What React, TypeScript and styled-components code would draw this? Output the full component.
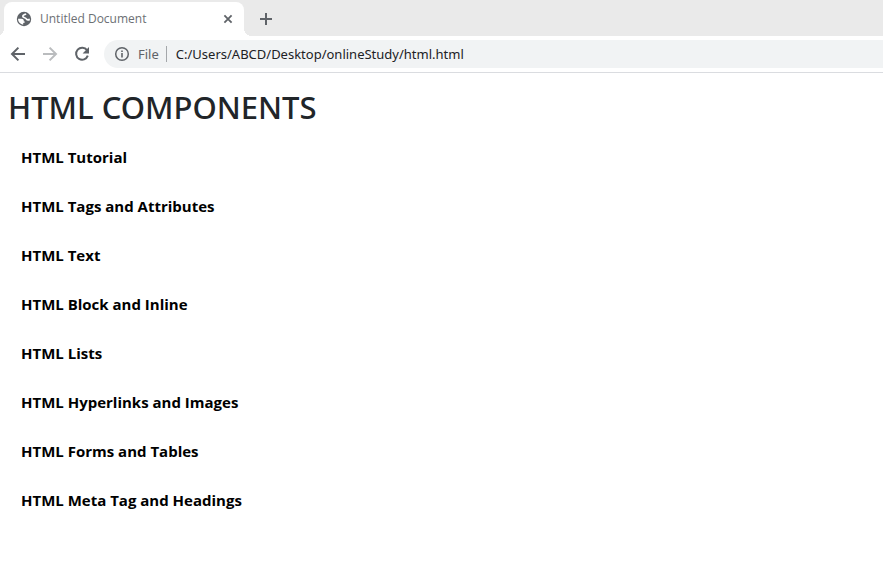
import React from "react";
import styled, { createGlobalStyle } from "styled-components";

const GlobalStyle = createGlobalStyle`
  *, *::before, *::after { box-sizing: border-box; }
  body {
    margin: 0;
    background: #fff;
    color: #212529;
    font-family: "Segoe UI", "Noto Sans", sans-serif;
    overflow-x: hidden;
  }
  button, input { font: inherit; color: inherit; border: 0; background: none; padding: 0; margin: 0; }
  svg { display: block; flex: none; }
`;

const TabStrip = styled.div`
  display: flex;
  align-items: flex-end;
  height: 36px;
  padding-left: 4px;
  background: #eaeaea;
`;

const Tab = styled.div`
  position: relative;
  display: flex;
  align-items: center;
  gap: 8px;
  width: 240px;
  height: 34px;
  padding: 0 8px 0 12px;
  border-radius: 8px 8px 0 0;
  background: #fff;
  color: #5f6368;

  &::before, &::after {
    content: "";
    position: absolute;
    bottom: 0;
    width: 8px;
    height: 8px;
  }
  &::before {
    right: 100%;
    background: radial-gradient(circle at 0 0, transparent 8px, #fff 8px);
  }
  &::after {
    left: 100%;
    background: radial-gradient(circle at 100% 0, transparent 8px, #fff 8px);
  }
`;

const TabTitle = styled.span`
  flex: 1;
  color: #6c7074;
  font-family: "Segoe UI", "Open Sans", sans-serif;
  font-size: 12px;
  line-height: 16px;
  white-space: nowrap;
`;

const IconButton = styled.button<{ $size: number }>`
  display: flex;
  align-items: center;
  justify-content: center;
  width: ${(p) => p.$size}px;
  height: ${(p) => p.$size}px;
  border-radius: 50%;
  color: #5f6368;

  &:disabled { color: #babcbe; }
`;

const NewTabSlot = styled.div`
  display: flex;
  align-items: center;
  height: 34px;
  padding-left: 8px;
`;

const Toolbar = styled.div`
  display: flex;
  align-items: center;
  gap: 4px;
  height: 37px;
  padding-left: 4px;
  border-bottom: 1px solid #dadce0;
`;

const AddressBar = styled.label`
  display: flex;
  flex: 1;
  align-items: center;
  height: 28px;
  margin-left: 4px;
  padding-left: 10px;
  border-radius: 14px 0 0 14px;
  background: #f1f3f4;
  color: #5f6368;
  font-size: 13px;
  line-height: 20px;
`;

const Scheme = styled.span`
  margin-left: 8px;
  padding-right: 7px;
`;

const Divider = styled.span`
  width: 1px;
  height: 16px;
  background: #a4a7aa;
`;

const AddressInput = styled.input`
  flex: 1;
  min-width: 0;
  margin-left: 9px;
  color: #202124;
  outline: 0;
`;

const Content = styled.main`
  padding: 12px 8px;
`;

const Title = styled.h1`
  margin: 0 0 8px;
  font-size: 31px;
  font-weight: 500;
  line-height: 44px;
`;

const TopicList = styled.ul`
  display: flex;
  flex-direction: column;
  align-items: flex-start;
  gap: 9px;
  margin: 0;
  padding: 0;
  list-style: none;
`;

const TopicButton = styled.button`
  padding: 8px 13px;
  color: #000;
  font-family: "Segoe UI", "Open Sans", sans-serif;
  font-size: 15px;
  font-weight: 700;
  line-height: 24px;
`;

const topics = [
  "HTML Tutorial",
  "HTML Tags and Attributes",
  "HTML Text",
  "HTML Block and Inline",
  "HTML Lists",
  "HTML Hyperlinks and Images",
  "HTML Forms and Tables",
  "HTML Meta Tag and Headings",
];

const GlobeIcon = () => (
  <svg width="16" height="16" viewBox="0 0 16 16" aria-hidden="true">
    <circle cx="8" cy="8" r="7.2" fill="#5f6368" />
    <path d="M2 7.8H5.4C6.9 7.8 7.8 8.7 7.8 9.8V10.6H8.8V11.4L7.2 12V13.8A6 6 0 0 1 2 7.8Z" fill="#fff" />
    <path
      d="M10 2.8C9 3.6 7 4 6.8 5.2 6.6 6.8 9.6 6.6 10.2 7.8 10.6 8.8 12.2 9 13.8 8.4"
      fill="none"
      stroke="#fff"
      strokeWidth="1.7"
    />
  </svg>
);

const StrokeIcon = ({ d, size = 16, width = 2 }: { d: string; size?: number; width?: number }) => (
  <svg width={size} height={size} viewBox={`0 0 ${size} ${size}`} fill="none" stroke="currentColor" strokeWidth={width} aria-hidden="true">
    <path d={d} />
  </svg>
);

const ReloadIcon = () => (
  <svg width="16" height="16" viewBox="0 0 16 16" aria-hidden="true">
    <path d="M13 4.2A6 6 0 1 0 13.8 9.7" fill="none" stroke="currentColor" strokeWidth="2" />
    <path d="M15 1v6.4H8.6Z" fill="currentColor" />
  </svg>
);

const InfoIcon = () => (
  <svg width="16" height="16" viewBox="0 0 16 16" aria-hidden="true">
    <circle cx="8" cy="8" r="6.3" fill="none" stroke="currentColor" strokeWidth="1.5" />
    <path d="M7.2 7h1.6v4.6H7.2zM7.2 4.4h1.6V6H7.2z" fill="currentColor" />
  </svg>
);

export default function App() {
  return (
    <>
      <GlobalStyle />
      <header>
        <TabStrip>
          <Tab>
            <GlobeIcon />
            <TabTitle>Untitled Document</TabTitle>
            <IconButton $size={16} type="button" aria-label="Close tab">
              <StrokeIcon d="M4.4 4.4 11.6 11.6M11.6 4.4 4.4 11.6" width={1.8} />
            </IconButton>
          </Tab>
          <NewTabSlot>
            <IconButton $size={28} type="button" aria-label="New tab">
              <StrokeIcon d="M8 2v12M2 8h12" />
            </IconButton>
          </NewTabSlot>
        </TabStrip>
        <Toolbar>
          <IconButton $size={28} type="button" aria-label="Back">
            <StrokeIcon d="M15 8H2.4M8.4 1.6 2 8l6.4 6.4" />
          </IconButton>
          <IconButton $size={28} type="button" aria-label="Forward" disabled>
            <StrokeIcon d="M1 8h12.6M7.6 1.6 14 8l-6.4 6.4" />
          </IconButton>
          <IconButton $size={28} type="button" aria-label="Reload">
            <ReloadIcon />
          </IconButton>
          <AddressBar>
            <InfoIcon />
            <Scheme>File</Scheme>
            <Divider />
            <AddressInput
              type="text"
              aria-label="Address"
              spellCheck={false}
              defaultValue="C:/Users/ABCD/Desktop/onlineStudy/html.html"
            />
          </AddressBar>
        </Toolbar>
      </header>
      <Content>
        <Title>HTML COMPONENTS</Title>
        <TopicList>
          {topics.map((topic) => (
            <li key={topic}>
              <TopicButton type="button">{topic}</TopicButton>
            </li>
          ))}
        </TopicList>
      </Content>
    </>
  );
}
